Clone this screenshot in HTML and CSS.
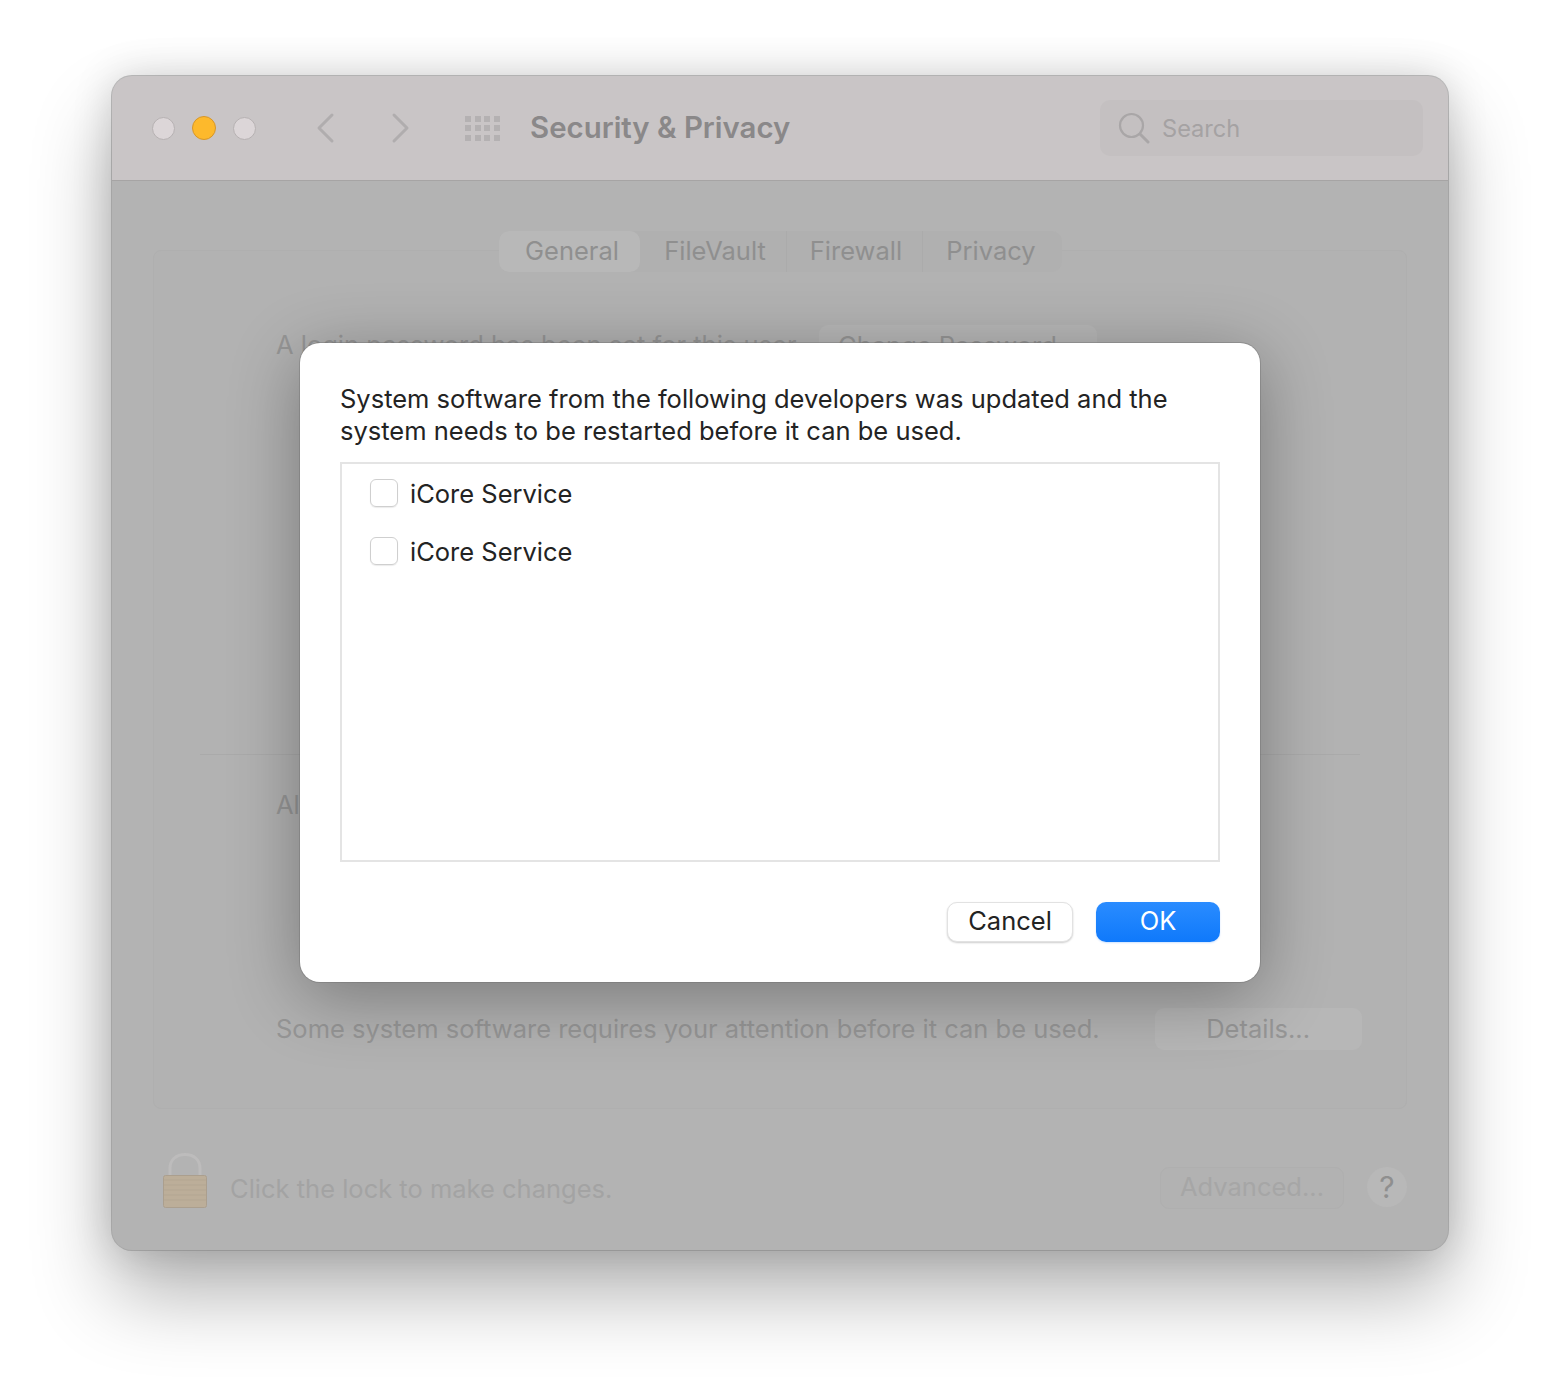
FILE: index.html
```html
<!DOCTYPE html>
<html>
<head>
<meta charset="utf-8">
<title>Security &amp; Privacy</title>
<link rel="stylesheet" href="styles.css">
</head>
<body>
<div class="window">
	<div class="titlebar">
		<div class="lights">
			<span class="light"></span>
			<span class="light light-min"></span>
			<span class="light"></span>
		</div>
		<div class="nav">
			<svg width="20" height="32" viewBox="0 0 20 32"><path d="M17 3 4 16l13 13" fill="none" stroke="#b0adae" stroke-width="3" stroke-linecap="round" stroke-linejoin="round"/></svg>
			<svg width="20" height="32" viewBox="0 0 20 32"><path d="m3 3 13 13L3 29" fill="none" stroke="#b0adae" stroke-width="3" stroke-linecap="round" stroke-linejoin="round"/></svg>
		</div>
		<div class="grid">
			<i></i><i></i><i></i><i></i>
			<i></i><i></i><i></i><i></i>
			<i></i><i></i><i></i><i></i>
		</div>
		<div class="title">Security &amp; Privacy</div>
		<div class="search">
			<svg width="32" height="32" viewBox="0 0 32 32"><circle cx="13.5" cy="13.5" r="11.5" fill="none" stroke="#a9a6a7" stroke-width="2.2"/><path d="m22 22 8 8" stroke="#a9a6a7" stroke-width="3" stroke-linecap="round"/></svg>
			<span>Search</span>
		</div>
	</div>
	<div class="content">
		<div class="panel">
			<div class="tabs">
				<div class="tab tab-on">General</div>
				<div class="tab tab-vault">FileVault</div>
				<div class="tab tab-fire">Firewall</div>
				<div class="tab tab-priv">Privacy</div>
			</div>
			<div class="row row-login">
				<span>A login password has been set for this user</span>
				<div class="btn btn-pass">Change Password...</div>
			</div>
			<div class="sep"></div>
			<div class="row row-allow">
				<span>Allow apps downloaded from:</span>
			</div>
			<div class="row row-attn">
				<span>Some system software requires your attention before it can be used.</span>
				<div class="btn btn-details">Details...</div>
			</div>
		</div>
		<div class="footer">
			<svg class="lock" width="44" height="55" viewBox="0 0 44 55">
				<path d="M7 23V15C7 7 13 1.500 22 1.500S37 7 37 15v8" fill="none" stroke="#bdbcbc" stroke-width="3"/>
				<rect x=".5" y="22.500" width="43" height="32" rx="2" fill="#bcae99" stroke="#ab9f8e"/>
				<path d="M1 27h42M1 32h42M1 37h42M1 42h42M1 47h42" stroke="#b3a692" stroke-width="1"/>
			</svg>
			<span class="lock-text">Click the lock to make changes.</span>
			<div class="btn btn-adv">Advanced...</div>
			<div class="help">?</div>
		</div>
	</div>
	<div class="dialog">
		<p class="msg">System software from the following developers was updated and the system needs to be restarted before it can be used.</p>
		<div class="list">
			<label class="item"><span class="check"></span>iCore Service</label>
			<label class="item"><span class="check"></span>iCore Service</label>
		</div>
		<div class="actions">
			<div class="dbtn">Cancel</div>
			<div class="dbtn dbtn-ok">OK</div>
		</div>
	</div>
</div>
</body>
</html>
```

FILE: styles.css
```css
* {box-sizing: border-box;}
html, body {height: 100%;}
body {
	margin: 0;
	padding: 76px 0 0 112px;
	background: #fff;
	font-family: Inter, "Liberation Sans", sans-serif;
	font-size: 25.5px;
}
.window {
	position: relative;
	width: 1336px;
	height: 1174px;
	border-radius: 20px;
	background: #b3b3b3;
	box-shadow: 0 0 0 1px rgba(130,130,130,.5), 0 44px 80px rgba(0,0,0,.3), 0 0 40px rgba(0,0,0,.16);
	display: flex;
	flex-direction: column;
}
.titlebar {
	height: 105px;
	flex: none;
	display: flex;
	align-items: center;
	padding: 0 25px 0 40px;
	background: #c9c5c6;
	border-bottom: 1px solid #a6a4a4;
	border-radius: 20px 20px 0 0;
}
.lights {display: flex; gap: 17px;}
.light {
	width: 23px;
	height: 23px;
	border-radius: 50%;
	background: #dcd6d8;
	border: 1px solid #b6b1b2;
}
.light-min {
	width: 24px;
	height: 24px;
	margin-top: -1px;
	background: #fdb92c;
	border-color: #d6962a;
}
.nav {display: flex; gap: 56px; margin-left: 59px;}
.grid {
	display: grid;
	grid-template-columns: repeat(4, 6px);
	grid-template-rows: repeat(3, 6px);
	column-gap: 3.7px;
	row-gap: 3.5px;
	margin-left: 54px;
}
.grid i {background: #b4b1b2;}
.title {
	margin: -2px 0 0 30px;
	font-size: 29.4px;
	font-weight: 600;
	color: #8a8889;
	white-space: nowrap;
}
.search {
	margin-left: auto;
	width: 323px;
	height: 56px;
	padding: 0 0 0 18px;
	display: flex;
	align-items: center;
	gap: 12px;
	border-radius: 10px;
	background: #c4c0c1;
	font-size: 23.6px;
	color: #a5a2a3;
}
.content {
	flex: 1;
	display: flex;
	flex-direction: column;
	padding: 69px 41px 0;
	border-radius: 0 0 20px 20px;
}
.panel {
	position: relative;
	height: 859px;
	border: 1px solid #afafaf;
	border-radius: 8px;
	background: #b2b2b2;
	color: #969696;
}
.tabs {
	display: flex;
	width: 563px;
	height: 41px;
	margin: -20px auto 0;
	border-radius: 10px;
	background: #b0b0b0;
	color: #8f8f8f;
}
.tab {
	flex: none;
	padding-bottom: 2px;
	display: flex;
	align-items: center;
	justify-content: center;
}
.tab-on {
	width: 141px;
	padding-left: 6px;
	background: #b8b8b8;
	border-radius: 10px;
}
.tab-vault {width: 147px; padding-left: 5px; border-right: 1px solid #ababab;}
.tab-fire {width: 136px; padding-left: 4px; border-right: 1px solid #ababab;}
.tab-priv {width: 139px; padding-right: 2px;}
.row {display: flex; align-items: center; white-space: nowrap;}
.row span {margin-top: -2px;}
.row-login {margin: 53px 0 0 122px; height: 42px; gap: 23px;}
.row-login span {margin-top: -4px;}
.sep {height: 1px; margin: 387px 46px 0; background: #aaaaaa;}
.row-allow {margin: 29px 0 0 122px; height: 42px;}
.row-attn {margin: 182px 0 0 122px; height: 42px;}
.btn {
	display: flex;
	align-items: center;
	justify-content: center;
	height: 42px;
	padding-bottom: 2px;
	border-radius: 9px;
	background: #b7b7b7;
}
.btn-pass {width: 278px;}
.btn-details {width: 207px; margin-left: 55px;}
.footer {
	flex: 1;
	display: flex;
	align-items: center;
	padding: 16px 0 0 10px;
}
.lock {margin-bottom: 14px;}
.lock-text {margin: 2px 0 0 23px; color: #a3a3a3;}
.btn-adv {
	width: 184px;
	margin-left: auto;
	border: 1px solid #afafaf;
	background: #b2b2b2;
	color: #a6a6a6;
}
.help {
	width: 40px;
	height: 40px;
	margin: -2px 0 0 23px;
	border-radius: 50%;
	background: #b8b8b8;
	color: #8f8f8f;
	font-size: 30px;
	display: flex;
	align-items: center;
	justify-content: center;
}
.dialog {
	position: absolute;
	left: 188px;
	top: 267px;
	width: 960px;
	height: 639px;
	padding: 40px;
	border-radius: 20px;
	background: #fff;
	box-shadow: 0 0 0 1px rgba(110,110,110,.4), 0 14px 70px rgba(0,0,0,.33);
	display: flex;
	flex-direction: column;
}
.msg {
	margin: 0;
	line-height: 32px;
	color: #232323;
}
.list {
	height: 401px;
	margin-top: 15px;
	padding: 0 28px;
	border: 2px solid #e4e4e4;
	display: flex;
	flex-direction: column;
}
.item {
	height: 58px;
	display: flex;
	align-items: center;
	gap: 12px;
	color: #232323;
}
.check {
	width: 28px;
	height: 28px;
	border: 1px solid #cfcfcf;
	border-radius: 6px;
	box-shadow: 0 1px 1px rgba(0,0,0,.08);
}
.actions {
	display: flex;
	justify-content: flex-end;
	gap: 23px;
	margin-top: 40px;
}
.dbtn {
	width: 126px;
	height: 40px;
	padding-bottom: 3px;
	display: flex;
	align-items: center;
	justify-content: center;
	border: 1px solid #e2e2e2;
	border-radius: 10px;
	background: #fff;
	color: #232323;
	box-shadow: 0 1px 2px rgba(0,0,0,.2);
}
.dbtn-ok {
	width: 124px;
	border: 0;
	background: linear-gradient(#2a8cff, #0f79fb);
	color: #fff;
	box-shadow: 0 1px 2px rgba(0,110,255,.2);
}
```
